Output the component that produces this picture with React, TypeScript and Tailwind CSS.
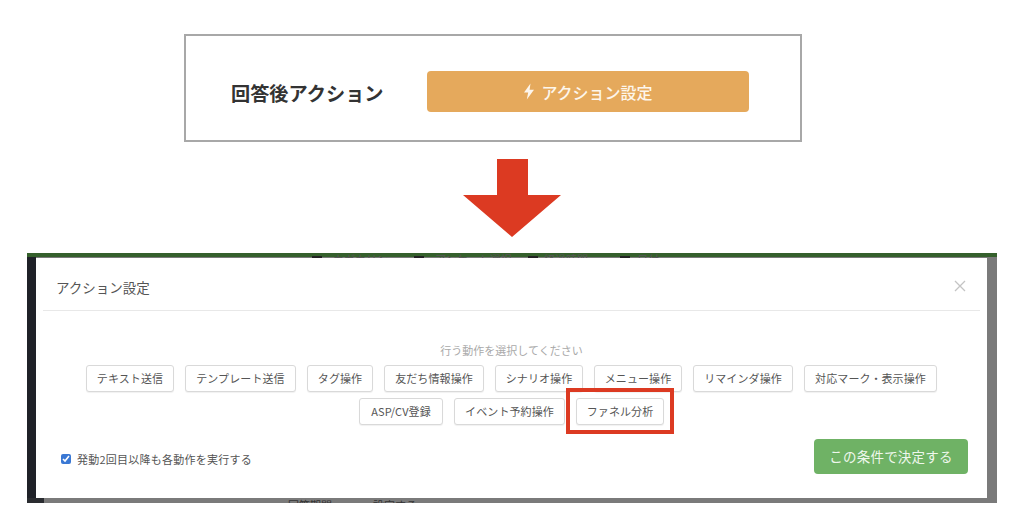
const font = "font-['Noto_Sans_CJK_JP','Noto_Sans',sans-serif]"

function ActionButton({ label, width }: { label: string; width: string }) {
  return (
    <button
      className={`flex h-[27px] items-center justify-center rounded-[3px] border border-[#d9d9d9] bg-white text-[11px] tracking-[0.1px] text-[#555] shadow-[0_1px_1px_rgba(0,0,0,0.06)] ${width}`}
    >
      {label}
    </button>
  )
}

// tops of the page behind the modal, only a sliver of each shows
function PeekLabel({ label, left, gap }: { label: string; left: string; gap: string }) {
  return (
    <div className={`absolute top-[1px] flex h-[4px] items-start overflow-hidden ${left} ${gap}`}>
      <span className="mt-[2px] h-[2px] w-[10px] shrink-0 bg-[#222]" />
      <span className="whitespace-nowrap text-[11px] leading-[11px] text-[#555]">{label}</span>
    </div>
  )
}

export default function App() {
  return (
    <div className={`h-[516px] w-[1024px] overflow-hidden bg-white ${font}`}>
      <div className="flex pl-[184px] pt-[34px]">
        <div className="flex h-[108px] w-[618px] items-start border-2 border-[#a8a8a8] pl-[45px]">
          <span className="mt-[48px] w-[196px] text-[19.2px] font-bold leading-none text-[#333]">回答後アクション</span>
          <div className="mt-[35px] flex h-[41px] w-[322px] items-center justify-center gap-[6px] rounded-[4px] bg-[#e5a95c] text-[16px] font-medium text-[#fdf6ec]">
            <svg width="12" height="17" viewBox="0 0 12 17" fill="currentColor">
              <path d="M7.5 0.5 L1 9.5 H5.2 L3.8 16.5 L11 6.8 H6.6 Z" />
            </svg>
            <span>アクション設定</span>
          </div>
        </div>
      </div>

      <div className="flex justify-center pt-[17px]">
        <svg width="100" height="78" viewBox="0 0 100 78">
          <path d="M35 0 H66 V36 H99 L50 78 L1 36 H35 Z" fill="#dc3a22" />
        </svg>
      </div>

      <div className="relative ml-[27px] mt-[16px] h-[250px] w-[970px] bg-[#7a7a7a] pl-[9px] pt-[5px]">
        <div className="absolute inset-x-0 top-0 h-[4px] bg-[#35602c]" />
        <div className="absolute bottom-0 left-0 top-[4px] w-[9px] bg-[#1f2128]" />
        <div className="absolute bottom-0 left-0 h-[5px] w-[17px] bg-[#2a2c30]" />
        <PeekLabel label="カガカリン" left="left-[285px]" gap="gap-[11px]" />
        <PeekLabel label="アンケート選択" left="left-[387px]" gap="gap-[11px]" />
        <PeekLabel label="経過時間" left="left-[501px]" gap="gap-[6px]" />
        <PeekLabel label="日付" left="left-[593px]" gap="gap-[7px]" />

        <div className="relative flex h-[240px] w-[951px] flex-col bg-white">
          <div className="mx-[7px] flex h-[53px] items-center justify-between border-b border-[#e8e8e8] pl-[13px] pr-[14px] pt-[7px]">
            <span className="text-[13.5px] text-[#555]">アクション設定</span>
            <svg width="12" height="12" viewBox="0 0 12 12" stroke="#c4c4c4" strokeWidth="1.3" className="mb-[4px]">
              <path d="M1 1 L11 11 M11 1 L1 11" />
            </svg>
          </div>

          <div className="flex flex-col items-center pt-[31px]">
            <p className="text-[11px] leading-[16px] text-[#a9a9a9]">行う動作を選択してください</p>
            <div className="mt-[7px] flex gap-[11px]">
              <ActionButton label="テキスト送信" width="w-[88px]" />
              <ActionButton label="テンプレート送信" width="w-[111px]" />
              <ActionButton label="タグ操作" width="w-[66px]" />
              <ActionButton label="友だち情報操作" width="w-[100px]" />
              <ActionButton label="シナリオ操作" width="w-[88px]" />
              <ActionButton label="メニュー操作" width="w-[88px]" />
              <ActionButton label="リマインダ操作" width="w-[100px]" />
              <ActionButton label="対応マーク・表示操作" width="w-[133px]" />
            </div>
            <div className="mt-[6px] flex gap-[11px]">
              <ActionButton label="ASP/CV登録" width="w-[84px]" />
              <ActionButton label="イベント予約操作" width="w-[111px]" />
              <div className="relative">
                <ActionButton label="ファネル分析" width="w-[88px]" />
                <div className="absolute inset-x-[-10px] bottom-[-9px] top-[-10px] border-[4px] border-[#dc3a22]" />
              </div>
            </div>
          </div>

          <div className="flex items-center justify-between pl-[25px] pr-[19px] pt-[14px]">
            <label className="mt-[5px] flex items-center gap-[6px] text-[11px] tracking-[0.25px] text-[#555]">
              <input type="checkbox" defaultChecked className="h-[10px] w-[10px] accent-[#3a78d4]" />
              発動2回目以降も各動作を実行する
            </label>
            <button className="flex h-[35px] w-[154px] items-center justify-center rounded-[4px] bg-[#6fb265] text-[13.5px] tracking-[0.2px] text-[#eef7ec]">
              この条件で決定する
            </button>
          </div>
        </div>

        <div className="absolute left-[261px] top-[245px] flex h-[5px] gap-[41px] overflow-hidden whitespace-nowrap text-[11px] leading-[14px] text-[#333]">
          <span>回答期間</span>
          <span>設定する</span>
        </div>
      </div>
    </div>
  )
}
